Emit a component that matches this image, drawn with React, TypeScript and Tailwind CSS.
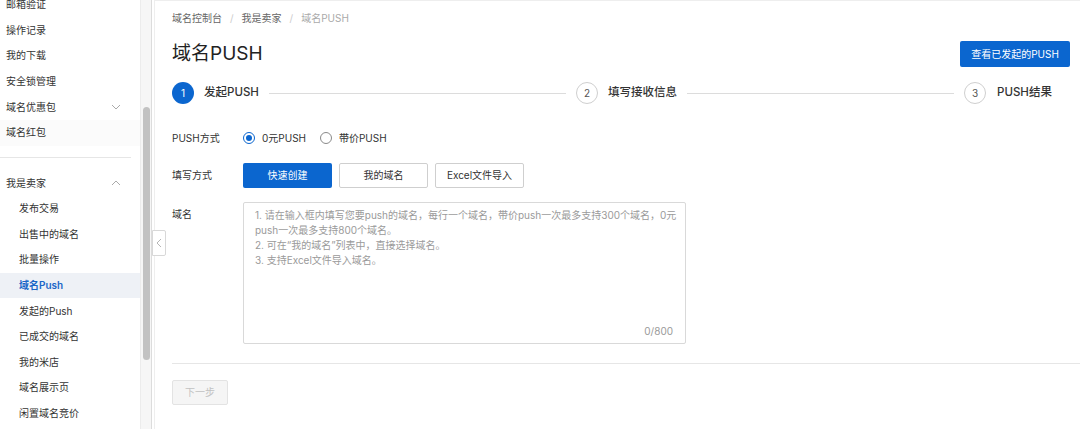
import React from "react";

const FONT = { fontFamily: 'Inter, "Noto Sans CJK SC", sans-serif' };

function ChevronDown() {
  return (
    <svg width="10" height="6" viewBox="0 0 10 6" fill="none">
      <path d="M1 1l4 4 4-4" stroke="#aaa" strokeWidth="1" />
    </svg>
  );
}
function ChevronUp() {
  return (
    <svg width="10" height="6" viewBox="0 0 10 6" fill="none">
      <path d="M1 5l4-4 4 4" stroke="#aaa" strokeWidth="1" />
    </svg>
  );
}

const topItems = ["邮箱验证", "操作记录", "我的下载", "安全锁管理"];
const subItems = ["发布交易", "出售中的域名", "批量操作", "域名Push", "发起的Push", "已成交的域名", "我的米店", "域名展示页", "闲置域名竞价"];

function Sidebar() {
  return (
    <div className="flex w-[152px] shrink-0 border-r border-[#dcdcdc] h-full overflow-hidden">
      <div className="w-[140px] shrink-0 overflow-hidden">
        <div className="-mt-[8px] text-[10px] text-[#333]">
          {topItems.map((t) => (
            <div key={t} className="h-[25.6px] flex items-center pl-[6px]">{t}</div>
          ))}
          <div className="h-[25.6px] flex items-center justify-between pl-[6px] pr-[19px]">
            <span>域名优惠包</span>
            <ChevronDown />
          </div>
          <div className="h-[25.6px] flex items-center pl-[6px] bg-[#fbfbfb]">域名红包</div>
          <div className="h-[24.8px] flex items-center">
            <div className="w-[131px] border-t border-[#e6e6e6]" />
          </div>
          <div className="h-[25.6px] flex items-center justify-between pl-[6px] pr-[19px]">
            <span>我是卖家</span>
            <ChevronUp />
          </div>
          {subItems.map((t) => (
            <div
              key={t}
              className={
                t === "域名Push"
                  ? "h-[25.6px] flex items-center pl-[19px] bg-[#eef1f6] text-[#1a66c8] font-semibold"
                  : "h-[25.6px] flex items-center pl-[19px]"
              }
            >
              {t}
            </div>
          ))}
        </div>
      </div>
      <div className="w-[12px] shrink-0 bg-[#f6f6f6] border-l border-[#ececec] flex justify-center">
        <div className="mt-[107px] w-[7px] h-[253px] rounded-full bg-[#c2c2c2]" />
      </div>
    </div>
  );
}

function StepCircle({ n, active }: { n: number; active?: boolean }) {
  return active ? (
    <div className="w-[22px] h-[22px] rounded-full bg-[#0b66cf] text-white text-[10px] flex items-center justify-center shrink-0">{n}</div>
  ) : (
    <div className="w-[22px] h-[22px] rounded-full border border-[#cfcfcf] text-[#555] text-[10px] flex items-center justify-center shrink-0 bg-white">{n}</div>
  );
}

function Radio({ checked, label }: { checked?: boolean; label: string }) {
  return (
    <div className="flex items-center">
      {checked ? (
        <div className="w-[12px] h-[12px] rounded-full border border-[#0b66cf] flex items-center justify-center">
          <div className="w-[6px] h-[6px] rounded-full bg-[#0b66cf]" />
        </div>
      ) : (
        <div className="w-[12px] h-[12px] rounded-full border border-[#8a8a8a]" />
      )}
      <span className="ml-[7px] text-[10px] text-[#333]">{label}</span>
    </div>
  );
}

export default function App() {
  return (
    <div className="w-[1080px] h-[429px] flex bg-white overflow-hidden relative" style={FONT}>
      <Sidebar />
      <div className="absolute left-[152px] top-[230px] w-[14px] h-[26px] bg-white border border-[#d8d8d8] rounded-r-[2px] flex items-center justify-center">
        <svg width="6" height="10" viewBox="0 0 6 10" fill="none">
          <path d="M5 1L1 5l4 4" stroke="#b5b5b5" strokeWidth="1" />
        </svg>
      </div>
      <div className="flex-1 border-l border-t border-[#eeeeee] ml-[2px] pl-[17px] flex flex-col">
        <div className="pt-[10px] text-[10px] leading-[14px] flex items-center">
          <span className="text-[#666]">域名控制台</span>
          <span className="mx-[8px] text-[#ccc]">/</span>
          <span className="text-[#666]">我是卖家</span>
          <span className="mx-[8px] text-[#ccc]">/</span>
          <span className="text-[#aaa]">域名PUSH</span>
        </div>
        <div className="mt-[16px] h-[26px] flex items-center justify-between pr-[10px]">
          <div className="text-[19px] text-[#222] leading-[26px]">域名PUSH</div>
          <div className="w-[110px] h-[26px] bg-[#0b66cf] rounded-[2px] text-white text-[10px] flex items-center justify-center">查看已发起的PUSH</div>
        </div>
        <div className="mt-[15px] h-[22px] flex items-center pr-[10px]">
          <div className="w-[404px] flex items-center">
            <StepCircle n={1} active />
            <span className="ml-[10px] text-[11.5px] font-medium text-[#333]">发起PUSH</span>
            <div className="flex-1 mx-[10px] border-t border-[#dcdcdc]" />
          </div>
          <div className="w-[388px] flex items-center">
            <StepCircle n={2} />
            <span className="ml-[10px] text-[11.5px] font-medium text-[#333]">填写接收信息</span>
            <div className="flex-1 mx-[10px] border-t border-[#dcdcdc]" />
          </div>
          <div className="flex items-center">
            <StepCircle n={3} />
            <span className="ml-[11px] text-[11.5px] font-medium text-[#333]">PUSH结果</span>
          </div>
        </div>
        <div className="mt-[24px] h-[20px] flex items-center">
          <div className="w-[71px] text-[10px] text-[#333]">PUSH方式</div>
          <div className="flex items-center gap-[14px]">
            <Radio checked label="0元PUSH" />
            <Radio label="带价PUSH" />
          </div>
        </div>
        <div className="mt-[15px] h-[25px] flex items-center">
          <div className="w-[71px] text-[10px] text-[#333]">填写方式</div>
          <div className="flex gap-[7px]">
            <div className="w-[89px] h-[25px] bg-[#0b66cf] rounded-[2px] text-white text-[10px] flex items-center justify-center">快速创建</div>
            <div className="w-[89px] h-[25px] border border-[#cfcfcf] rounded-[2px] text-[#333] text-[10px] flex items-center justify-center">我的域名</div>
            <div className="w-[89px] h-[25px] border border-[#cfcfcf] rounded-[2px] text-[#333] text-[10px] flex items-center justify-center">Excel文件导入</div>
          </div>
        </div>
        <div className="mt-[14px] flex">
          <div className="w-[71px] pt-[5px] text-[10px] leading-[14px] text-[#333]">域名</div>
          <div className="w-[443px] h-[142px] border border-[#d9d9d9] rounded-[2px] flex flex-col justify-between pl-[11px] pr-[12px] pt-[5px] pb-[4px]">
            <div className="text-[10px] leading-[15px] text-[#9a9a9a] whitespace-nowrap">
              <div>1. 请在输入框内填写您要push的域名，每行一个域名，带价push一次最多支持300个域名，0元</div>
              <div>push一次最多支持800个域名。</div>
              <div>2. 可在“我的域名”列表中，直接选择域名。</div>
              <div>3. 支持Excel文件导入域名。</div>
            </div>
            <div className="text-right text-[10px] text-[#999]">0/800</div>
          </div>
        </div>
        <div className="mt-[19px] border-t border-[#e6e6e6]" />
        <div className="mt-[16px] w-[56px] h-[25px] bg-[#f5f5f5] border border-[#e3e3e3] rounded-[2px] text-[#c2c2c2] text-[10px] flex items-center justify-center">下一步</div>
      </div>
    </div>
  );
}
